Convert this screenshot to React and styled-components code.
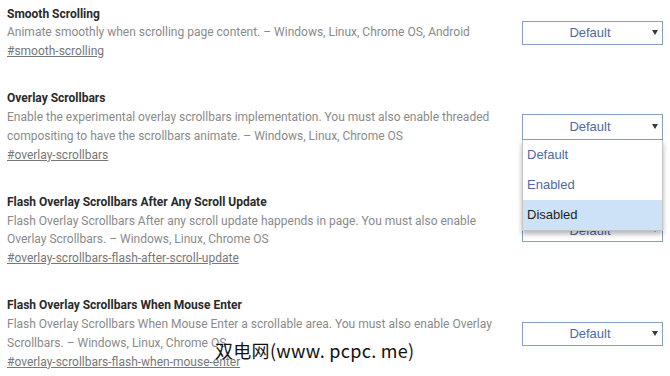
import React from "react";
import styled, { createGlobalStyle } from "styled-components";

const Global = createGlobalStyle`
  html, body { margin: 0; padding: 0; background: #fff; }
  body { font-family: Roboto, "Noto Sans", sans-serif; overflow: hidden; }
`;

const Page = styled.div`
  position: relative;
  width: 670px;
  height: 376px;
  padding: 4.7px 7px 0 7px;
  box-sizing: border-box;
  display: flex;
  flex-direction: column;
  gap: 28.7px;
`;

const Row = styled.div`
  display: flex;
  align-items: center;
  justify-content: space-between;
`;

const Info = styled.div`
  width: 500px;
  display: flex;
  flex-direction: column;
  font-size: 12px;
  line-height: 18.7px;
`;

const Title = styled.div`
  font-weight: 700;
  color: #2a2a2a;
`;

const Desc = styled.div`
  color: #8a8a8a;
`;

const Link = styled.a`
  color: #777;
  text-decoration: underline;
  align-self: flex-start;
`;

const SelectWrap = styled.div`
  position: relative;
  width: 141px;
`;

const SelectBox = styled.div`
  height: ${(p) => (p.$open ? "26px" : "24px")};
  box-sizing: border-box;
  border: 1px solid #8a9dc4;
  background: #fff;
  display: flex;
  align-items: center;
  justify-content: center;
  font-family: "Liberation Sans", Arial, sans-serif;
  font-size: 13px;
  color: #4d69a6;
  padding-right: 5px;
  position: relative;
`;

const Arrow = styled.span`
  position: absolute;
  right: 4px;
  top: calc(50% - 3px);
  width: 0;
  height: 0;
  border-left: 3px solid transparent;
  border-right: 3px solid transparent;
  border-top: 5px solid #3a3a3a;
`;

const Menu = styled.div`
  position: absolute;
  left: 0;
  top: 26px;
  width: 141px;
  background: #fff;
  border: 1px solid #c4c4c4;
  border-top: none;
  box-sizing: border-box;
  box-shadow: 0 3px 5px rgba(0, 0, 0, 0.3);
  z-index: 5;
  display: flex;
  flex-direction: column;
`;

const Option = styled.div`
  height: 30px;
  display: flex;
  align-items: center;
  padding-left: 4px;
  font-family: "Liberation Sans", Arial, sans-serif;
  font-size: 13px;
  color: ${(p) => (p.$selected ? "#1e1e1e" : "#4d69a6")};
  background: ${(p) => (p.$selected ? "#cde2f6" : "#fff")};
`;

const Watermark = styled.div`
  position: absolute;
  left: 215px;
  top: 337px;
  font-family: "Noto Sans CJK SC", "DejaVu Sans", sans-serif;
  font-size: 18px;
  line-height: 26px;
  letter-spacing: 0.3px;
  color: #111;
  white-space: nowrap;
  z-index: 10;
`;

const sections = [
  {
    title: "Smooth Scrolling",
    desc: "Animate smoothly when scrolling page content. – Windows, Linux, Chrome OS, Android",
    link: "#smooth-scrolling",
  },
  {
    title: "Overlay Scrollbars",
    desc: "Enable the experimental overlay scrollbars implementation. You must also enable threaded compositing to have the scrollbars animate. – Windows, Linux, Chrome OS",
    link: "#overlay-scrollbars",
    open: true,
  },
  {
    title: "Flash Overlay Scrollbars After Any Scroll Update",
    desc: "Flash Overlay Scrollbars After any scroll update happends in page. You must also enable Overlay Scrollbars. – Windows, Linux, Chrome OS",
    link: "#overlay-scrollbars-flash-after-scroll-update",
  },
  {
    title: "Flash Overlay Scrollbars When Mouse Enter",
    desc: "Flash Overlay Scrollbars When Mouse Enter a scrollable area. You must also enable Overlay Scrollbars. – Windows, Linux, Chrome OS",
    link: "#overlay-scrollbars-flash-when-mouse-enter",
  },
];

function Select({ open }) {
  return (
    <SelectWrap>
      <SelectBox $open={open}>
        Default
        <Arrow />
      </SelectBox>
      {open && (
        <Menu>
          <Option>Default</Option>
          <Option>Enabled</Option>
          <Option $selected>Disabled</Option>
        </Menu>
      )}
    </SelectWrap>
  );
}

export default function App() {
  return (
    <>
      <Global />
      <Page>
        {sections.map((s) => (
          <Row key={s.link}>
            <Info>
              <Title>{s.title}</Title>
              <Desc>{s.desc}</Desc>
              <Link>{s.link}</Link>
            </Info>
            <Select open={s.open} />
          </Row>
        ))}
        <Watermark>双电网(www. pcpc. me)</Watermark>
      </Page>
    </>
  );
}
